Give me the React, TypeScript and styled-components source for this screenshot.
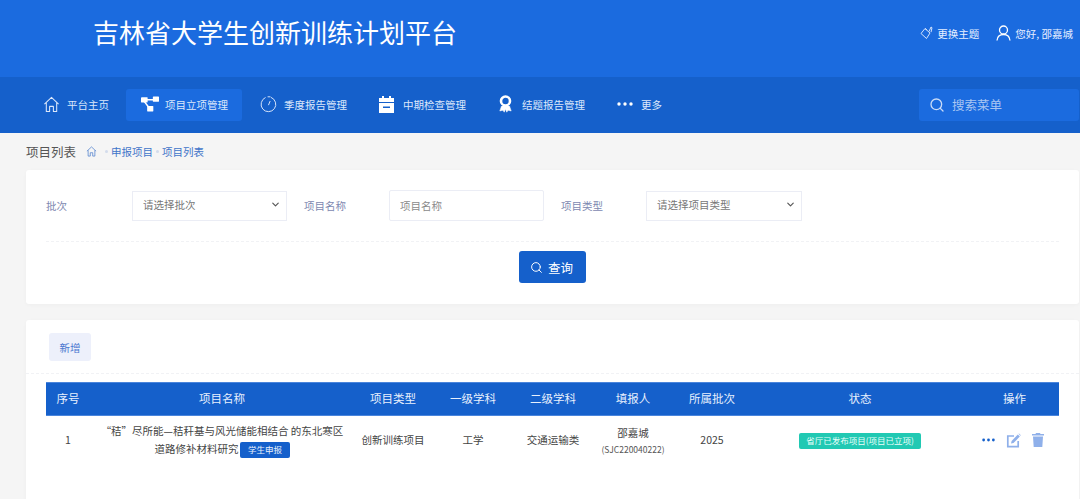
import React from 'react';
import styled, { createGlobalStyle } from 'styled-components';
import { ChevronDown, Search } from 'lucide-react';

const GlobalStyle = createGlobalStyle`
  html, body {
    margin: 0;
    height: 499px;
    overflow: hidden;
    background: #f5f5f5;
    font-family: "Noto Sans CJK SC", "Noto Sans", sans-serif;
  }
  * { box-sizing: border-box; }
`;

const TopBar = styled.header`
  height: 77px;
  background: #1b6bdf;
  display: flex;
  align-items: center;
  justify-content: space-between;
  padding: 0 7px 11px 93px;
  color: #fff;
`;

const Title = styled.h1`
  margin: 0 0 2px;
  font-size: 26px;
  font-weight: 400;
  line-height: 36px;
`;

const TopActions = styled.div`
  display: flex;
  align-items: center;
  gap: 17px;
`;

const TopAction = styled.div`
  display: flex;
  align-items: center;
  gap: 4px;
  font-size: 10.5px;
  color: #e6efff;
`;

const Nav = styled.nav`
  height: 56px;
  background: #1560cb;
  display: flex;
  align-items: center;
  padding: 0 1px 0 28px;
  gap: 3px;
`;

const NavItem = styled.a<{ $active?: boolean }>`
  height: 32px;
  display: flex;
  align-items: center;
  gap: 6px;
  padding: 0 14px 2px 15px;
  border-radius: 3px;
  font-size: 10.5px;
  color: #dce8fb;
  background: ${(p) => (p.$active ? '#1b6bdf' : 'transparent')};
`;

const NavIcon = styled.span`
  width: 18px;
  height: 20px;
  display: flex;
  align-items: center;
  justify-content: flex-start;
`;

const SearchBox = styled.div`
  margin-left: auto;
  width: 160px;
  height: 32px;
  background: #1b6bdf;
  border-radius: 3px;
  display: flex;
  align-items: center;
  gap: 7px;
  padding: 0 0 1px 10px;
  color: #c9dbf7;
`;

const SearchInput = styled.input`
  border: 0;
  outline: 0;
  background: transparent;
  width: 110px;
  padding: 0;
  font: inherit;
  font-size: 12.5px;
  color: #fff;
  &::placeholder { color: #a9c6f2; opacity: 1; }
`;

const Crumbs = styled.div`
  height: 37px;
  display: flex;
  align-items: center;
  padding: 0 0 0 26px;
  font-size: 10.5px;
  color: #3f74c9;
`;

const PageName = styled.span`
  font-size: 12.5px;
  color: #555;
  margin-right: 10px;
`;

const CrumbHome = styled.span`
  display: flex;
  margin-right: 5px;
`;

const CrumbDot = styled.i`
  width: 3px;
  height: 3px;
  border-radius: 50%;
  background: #d3dcec;
  margin: 0 3px;
`;

const Card = styled.section`
  margin: 0 1px 16px 26px;
  background: #fff;
  border-radius: 3px;
  box-shadow: 0 1px 4px rgba(0, 0, 0, 0.03);
`;

const FilterCard = styled(Card)`
  height: 134px;
  padding: 20px 20px 0;
`;

const FilterRow = styled.div`
  display: flex;
  align-items: flex-start;
  height: 30px;
  gap: 17px;
`;

const Field = styled.label`
  display: flex;
  align-items: center;
`;

const FieldName = styled.span<{ $width?: number }>`
  width: ${(p) => p.$width ?? 85}px;
  font-size: 10.5px;
  color: #7d88b0;
`;

const SelectWrap = styled.div`
  position: relative;
  color: #555;
  svg {
    position: absolute;
    right: 6px;
    top: 9px;
    pointer-events: none;
  }
`;

const Select = styled.select<{ $width: number }>`
  appearance: none;
  width: ${(p) => p.$width}px;
  height: 30px;
  border: 1px solid #ebedf5;
  background: #fff;
  padding: 0 0 3px 10px;
  font: inherit;
  font-size: 10.5px;
  color: #777;
  outline: 0;
`;

const TextInput = styled.input`
  width: 155px;
  height: 31px;
  border: 1px solid #ebedf5;
  border-radius: 2px;
  padding: 0 10px;
  font: inherit;
  font-size: 10.5px;
  outline: 0;
  &::placeholder { color: #8a8a8a; opacity: 1; }
`;

const Divider = styled.div`
  border-top: 1px dashed #f1f2f5;
`;

const FilterDivider = styled(Divider)`
  margin-top: 21px;
`;

const ButtonRow = styled.div`
  display: flex;
  justify-content: center;
  margin-top: 9px;
`;

const QueryButton = styled.button`
  width: 67px;
  height: 32px;
  border: 0;
  border-radius: 3px;
  background: #1560cb;
  color: #fff;
  font: inherit;
  font-size: 12.5px;
  display: flex;
  align-items: center;
  justify-content: center;
  gap: 5px;
  padding: 0 2px 0 0;
`;

const ListCard = styled(Card)`
  height: 240px;
  margin-bottom: 0;
`;

const ListTools = styled.div`
  display: flex;
  align-items: flex-start;
  height: 53px;
  padding: 13px 0 0 23px;
`;

const AddButton = styled.button`
  width: 42px;
  height: 28px;
  border: 0;
  border-radius: 3px;
  background: #edf0fb;
  color: #4a78d0;
  font: inherit;
  font-size: 10.5px;
`;

const TableWrap = styled.div`
  padding: 8px 20px 0;
`;

const Table = styled.table`
  width: 100%;
  table-layout: fixed;
  border-collapse: collapse;
`;

const Th = styled.th`
  height: 33px;
  padding: 0 0 2px;
  background: #1560cb;
  border-top: 1px solid #4a85dc;
  border-bottom: 1px solid #4a85dc;
  color: #e8f0fd;
  font-size: 11.5px;
  font-weight: 400;
  text-align: center;
`;

const Td = styled.td`
  height: 49px;
  padding: 0;
  font-size: 10.5px;
  line-height: 18px;
  color: #444;
  text-align: center;
  vertical-align: middle;
`;

const SourceTag = styled.span`
  display: inline-block;
  height: 16px;
  line-height: 15px;
  padding: 0 7.5px;
  margin-left: 2px;
  border-radius: 2px;
  background: #1560cb;
  color: #eaf1fd;
  font-size: 8.5px;
`;

const UserCode = styled.div`
  font-size: 8.5px;
  line-height: 14px;
  color: #555;
`;

const StatusTag = styled.span`
  display: inline-block;
  height: 16px;
  line-height: 15px;
  padding: 0 7px;
  border-radius: 2px;
  background: #21c9b3;
  color: #eafffb;
  font-size: 8.5px;
`;

const Ops = styled.div`
  display: flex;
  align-items: center;
  justify-content: flex-end;
  gap: 11px;
  padding-right: 15px;
`;

function HomeIcon({ size = 17 }: { size?: number }) {
  return (
    <svg width={size} height={size} viewBox="0 0 18 18" fill="none" stroke="currentColor" strokeWidth="1.1">
      <path d="M1.500 8.500 9 1.500l7.500 7M3.500 7v9.500h3.500v-5.500h4v5.500h3.500V7" strokeLinejoin="round" />
    </svg>
  );
}

function NodesIcon() {
  return (
    <svg width="19" height="16" viewBox="0 0 19 16" fill="#fff">
      <rect x="0" y="1" width="7" height="5.500" rx="0.500" />
      <rect x="12.500" y="0" width="6.500" height="5.500" rx="0.500" />
      <rect x="6.500" y="10" width="6.500" height="6" rx="0.500" />
      <path d="M5 2.800h9v1.600H5zM4.200 5l4.200 5.500-1.300 1-4.200-5.500z" />
    </svg>
  );
}

function ClockIcon() {
  return (
    <svg width="17" height="17" viewBox="0 0 17 17" fill="none" stroke="#d5e3fa" strokeWidth="1">
      <path d="M5.200 1.600a7.400 7.400 0 1 0 6 -.2" strokeLinecap="round" />
      <path d="M8 .8h2M8.600 8.800l1.400-3.400" strokeLinecap="round" />
    </svg>
  );
}

function CalendarIcon() {
  return (
    <svg width="15" height="17" viewBox="0 0 15 17" fill="#fff">
      <path d="M3 0h2v2h5V0h2v2h3v4H0V2h3zM0 7h15v10H0zM4 10.500v1.500h7v-1.500z" fillRule="evenodd" />
    </svg>
  );
}

function AwardIcon() {
  return (
    <svg width="15" height="18" viewBox="0 0 15 18" fill="none" stroke="#fff">
      <circle cx="7.500" cy="6" r="4.500" strokeWidth="2.600" />
      <path d="M3.500 11 1.800 16l3.200-.8 1.200 2 1.300-3 1.300 3 1.200-2 3.200.8-1.700-5" fill="#fff" strokeWidth="0.500" />
    </svg>
  );
}

function DotsIcon({ color, width = 16 }: { color: string; width?: number }) {
  return (
    <svg width={width} height="4" viewBox="0 0 16 4" fill={color}>
      <circle cx="2" cy="2" r="1.700" />
      <circle cx="8" cy="2" r="1.700" />
      <circle cx="14" cy="2" r="1.700" />
    </svg>
  );
}

function BrushIcon() {
  return (
    <svg width="13" height="14" viewBox="0 0 13 14" fill="none" stroke="#e6efff" strokeWidth="0.900">
      <path d="M1 7.500 5 2.500l5 4.500-3.500 5.500zM5 2.500 7 4M9 5.500l2-4.500 1 .7-1 4.500" strokeLinejoin="round" />
    </svg>
  );
}

function UserIcon() {
  return (
    <svg width="15" height="16" viewBox="0 0 15 16" fill="none" stroke="#fff" strokeWidth="1.300">
      <circle cx="7.500" cy="5" r="4" />
      <path d="M1 15.500c.3-3.500 2.800-6 6.500-6s6.200 2.500 6.500 6" />
    </svg>
  );
}

function EditIcon() {
  return (
    <svg width="15" height="15" viewBox="0 0 15 15">
      <path d="M8 3H1.800v10.700h10.400V8" fill="none" stroke="#8fb0ea" strokeWidth="1.700" />
      <path d="M5 10.500 5.600 8 11.800 1.600l2 2L7.500 10z" fill="#8fb0ea" />
      <path d="M12.500.8 13 .4l1.800 1.800-.5.600z" fill="#8fb0ea" />
    </svg>
  );
}

function TrashIcon() {
  return (
    <svg width="12" height="14" viewBox="0 0 12 14" fill="#8fb0ea">
      <path d="M4 0h4l.5 1H12v1.500H0V1h3.500zM1 3.500h10l-.7 10.500H1.700z" />
    </svg>
  );
}

const navItems = [
  { label: '平台主页', icon: <HomeIcon /> },
  { label: '项目立项管理', icon: <NodesIcon />, active: true },
  { label: '季度报告管理', icon: <ClockIcon /> },
  { label: '中期检查管理', icon: <CalendarIcon /> },
  { label: '结题报告管理', icon: <AwardIcon /> },
  { label: '更多', icon: <DotsIcon color="#fff" /> },
];

const columns = [
  { name: '序号', width: 44 },
  { name: '项目名称', width: 264 },
  { name: '项目类型', width: 78 },
  { name: '一级学科', width: 82 },
  { name: '二级学科', width: 78 },
  { name: '填报人', width: 82 },
  { name: '所属批次', width: 76 },
  { name: '状态', width: 220 },
  { name: '操作', width: 89 },
];

export default function App() {
  return (
    <>
      <GlobalStyle />
      <TopBar>
        <Title>吉林省大学生创新训练计划平台</Title>
        <TopActions>
          <TopAction>
            <BrushIcon />
            更换主题
          </TopAction>
          <TopAction>
            <UserIcon />
            您好, 邵嘉城
          </TopAction>
        </TopActions>
      </TopBar>
      <Nav>
        {navItems.map((item) => (
          <NavItem key={item.label} $active={item.active}>
            <NavIcon>{item.icon}</NavIcon>
            {item.label}
          </NavItem>
        ))}
        <SearchBox>
          <Search size={16} strokeWidth={2} />
          <SearchInput placeholder="搜索菜单" />
        </SearchBox>
      </Nav>
      <Crumbs>
        <PageName>项目列表</PageName>
        <CrumbHome>
          <HomeIcon size={11} />
        </CrumbHome>
        <CrumbDot />
        申报项目
        <CrumbDot />
        项目列表
      </Crumbs>
      <FilterCard>
        <FilterRow>
          <Field>
            <FieldName $width={86}>批次</FieldName>
            <SelectWrap>
              <Select $width={155}>
                <option>请选择批次</option>
              </Select>
              <ChevronDown size={11} strokeWidth={2.5} />
            </SelectWrap>
          </Field>
          <Field>
            <FieldName>项目名称</FieldName>
            <TextInput placeholder="项目名称" />
          </Field>
          <Field>
            <FieldName>项目类型</FieldName>
            <SelectWrap>
              <Select $width={156}>
                <option>请选择项目类型</option>
              </Select>
              <ChevronDown size={11} strokeWidth={2.5} />
            </SelectWrap>
          </Field>
        </FilterRow>
        <FilterDivider />
        <ButtonRow>
          <QueryButton>
            <Search size={13} strokeWidth={1.8} />
            查询
          </QueryButton>
        </ButtonRow>
      </FilterCard>
      <ListCard>
        <ListTools>
          <AddButton>新增</AddButton>
        </ListTools>
        <Divider />
        <TableWrap>
          <Table>
            <colgroup>
              {columns.map((c) => (
                <col key={c.name} width={c.width} />
              ))}
            </colgroup>
            <thead>
              <tr>
                {columns.map((c) => (
                  <Th key={c.name}>{c.name}</Th>
                ))}
              </tr>
            </thead>
            <tbody>
              <tr>
                <Td>1</Td>
                <Td>
                  “秸”尽所能—秸秆基与风光储能相结合 的东北寒区
                  <br />
                  道路修补材料研究
                  <SourceTag>学生申报</SourceTag>
                </Td>
                <Td>创新训练项目</Td>
                <Td>工学</Td>
                <Td>交通运输类</Td>
                <Td>
                  邵嘉城
                  <UserCode>(SJC220040222)</UserCode>
                </Td>
                <Td>2025</Td>
                <Td>
                  <StatusTag>省厅已发布项目(项目已立项)</StatusTag>
                </Td>
                <Td>
                  <Ops>
                    <DotsIcon color="#1560cb" width={13} />
                    <EditIcon />
                    <TrashIcon />
                  </Ops>
                </Td>
              </tr>
            </tbody>
          </Table>
        </TableWrap>
      </ListCard>
    </>
  );
}
